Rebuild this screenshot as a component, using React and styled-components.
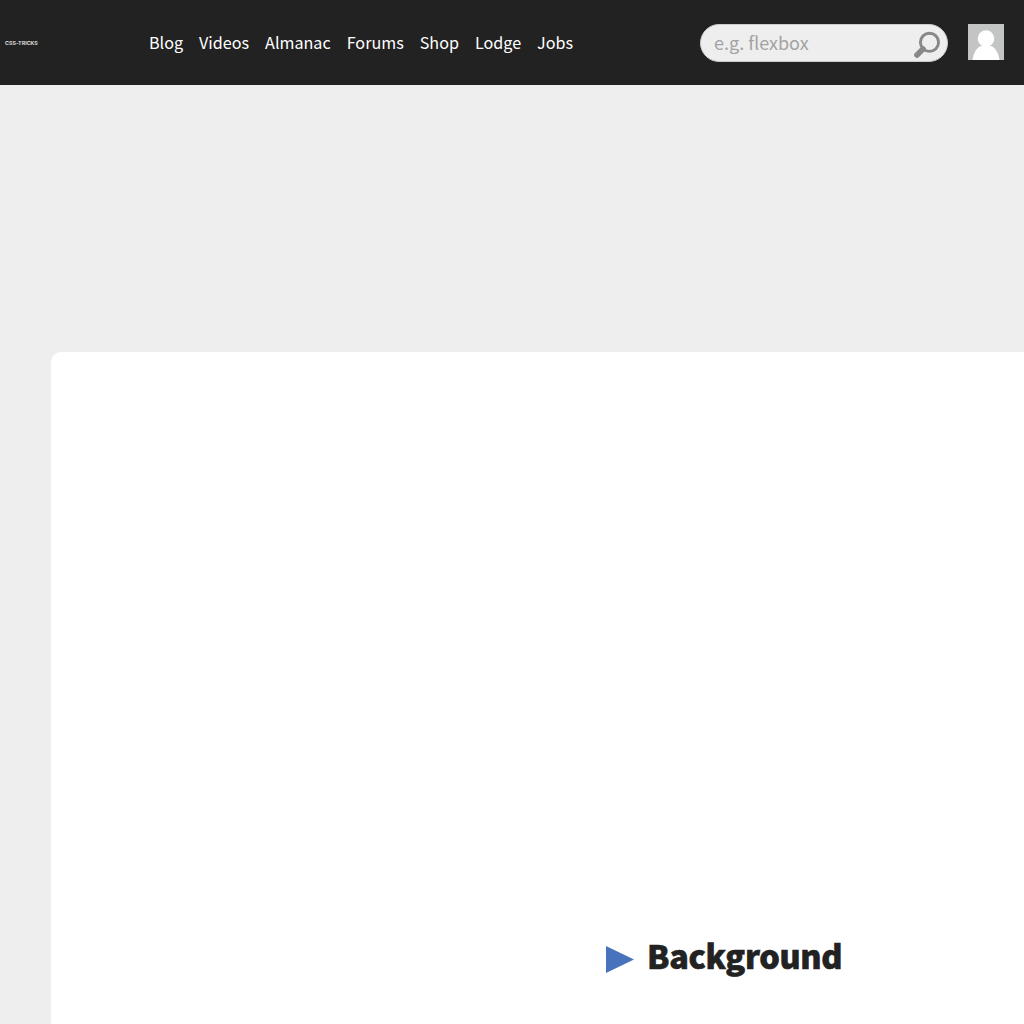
import React from 'react';
import styled, { createGlobalStyle } from 'styled-components';

const GlobalStyle = createGlobalStyle`
  * { box-sizing: border-box; }
  html, body { margin: 0; height: 100%; overflow: hidden; }
  body {
    background: #eee;
    color: #222;
    font-family: "Noto Sans CJK SC", "Noto Sans", sans-serif;
  }
`;

const Header = styled.header`
  display: flex;
  align-items: center;
  height: 85px;
  padding: 0 20px 0 5px;
  background: #222;
`;

const Logo = styled.a`
  width: 144px;
  padding-top: 1px;
  color: #e8e8e8;
  font: 600 5.4px/8px Inter, sans-serif;
  white-space: nowrap;
`;

const Nav = styled.nav`
  display: flex;
  gap: 16px;
  padding-bottom: 1px;
`;

const NavLink = styled.a`
  color: #fff;
  font-size: 16.15px;
  line-height: 24px;
`;

const Search = styled.form`
  display: flex;
  align-items: center;
  width: 248px;
  height: 38px;
  margin-left: auto;
  padding: 0 6px 0 13px;
  border: 1px solid #ccc;
  border-radius: 19px;
  background: #eee;
`;

const SearchInput = styled.input`
  flex: 1;
  min-width: 0;
  padding: 0 0 2px;
  border: 0;
  outline: 0;
  background: transparent;
  font: 400 18px/28px "Noto Sans CJK SC", sans-serif;
  &::placeholder { color: #a3a3a3; opacity: 1; }
`;

const SearchIcon = styled.svg`
  display: block;
  width: 27px;
  height: 28px;
  margin-top: 3px;
`;

const Avatar = styled.svg`
  display: block;
  width: 36px;
  height: 36px;
  margin: 0 0 1px 20px;
  background: #c3c4c4;
`;

const Page = styled.main`
  height: 720px;
  margin: 267px 0 0 51px;
  padding: 579px 0 0 555px;
  background: #fff;
  border-radius: 10px 0 0 0;
`;

const Summary = styled.div`
  display: flex;
  align-items: center;
  gap: 13px;
`;

const Triangle = styled.svg`
  display: block;
  width: 28px;
  height: 27px;
  margin-top: 9px;
`;

const Title = styled.h2`
  margin: 0;
  font-size: 32.4px;
  font-weight: 900;
  line-height: 48px;
  letter-spacing: -0.35px;
  -webkit-text-stroke: 0.6px #222;
`;

const links = ['Blog', 'Videos', 'Almanac', 'Forums', 'Shop', 'Lodge', 'Jobs'];

export default function App() {
  return (
    <>
      <GlobalStyle />
      <Header>
        <Logo>CSS-TRICKS</Logo>
        <Nav>
          {links.map((label) => <NavLink key={label}>{label}</NavLink>)}
        </Nav>
        <Search>
          <SearchInput placeholder="e.g. flexbox" />
          <SearchIcon viewBox="0 0 27 28" fill="none" stroke="#888">
            <circle cx="15.500" cy="12.300" r="9.100" strokeWidth="2.900" />
            <path d="M9 19L3 25" strokeWidth="5.600" strokeLinecap="round" />
          </SearchIcon>
        </Search>
        <Avatar viewBox="0 0 36 36" fill="#fff">
          <circle cx="18" cy="14.500" r="8.300" />
          <path d="M4.500 36C5.500 29 9 22 15 21.500H21C27 22 30.500 29 31.500 36Z" />
        </Avatar>
      </Header>
      <Page>
        <Summary>
          <Triangle viewBox="0 0 28 27"><path d="M0 0L28 13.500L0 27Z" fill="#4673bc" /></Triangle>
          <Title>Background</Title>
        </Summary>
      </Page>
    </>
  );
}
